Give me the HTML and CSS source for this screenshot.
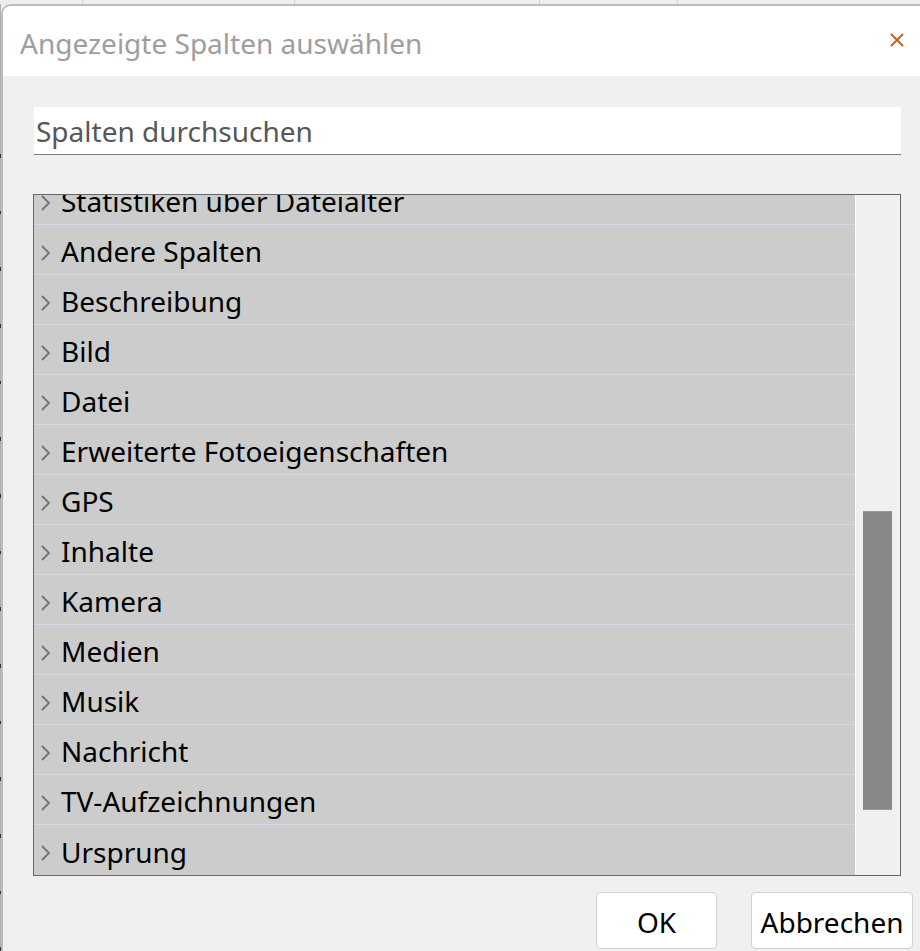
FILE: index.html
```html
<!DOCTYPE html>
<html lang="de">
<head>
<meta charset="utf-8">
<title>Angezeigte Spalten auswählen</title>
<link rel="stylesheet" href="styles.css">
</head>
<body>
<div class="backdrop-top">
  <div class="bt-cell c1"></div>
  <div class="bt-cell c2"></div>
  <div class="bt-cell c3"></div>
  <div class="bt-cell c4"></div>
  <div class="bt-cell c5"></div>
</div>
<div class="screen">
  <div class="left-strip">
    <span class="mark"></span><span class="mark"></span><span class="mark"></span><span class="mark"></span><span class="mark"></span><span class="mark"></span><span class="mark"></span><span class="mark"></span><span class="mark"></span><span class="mark"></span><span class="mark"></span><span class="mark"></span><span class="mark"></span><span class="mark"></span><span class="mark"></span>
  </div>
  <div class="dialog">
    <div class="titlebar">
      <div class="title">Angezeigte Spalten auswählen</div>
      <div class="close" aria-label="Schließen">
        <svg width="14" height="14" viewBox="0 0 14 14"><path d="M1 1 L13 13 M13 1 L1 13" stroke="#c85a1e" stroke-width="1.8" fill="none"/></svg>
      </div>
    </div>
    <div class="body">
      <div class="search">Spalten durchsuchen</div>
      <div class="list">
        <div class="rows">
          <div class="rows-inner">
            <div class="row"><svg class="chev" width="11" height="18" viewBox="0 0 11 18"><path d="M2 2 L9 9 L2 16" stroke="#767676" stroke-width="1.9" fill="none"/></svg><span class="label">Statistiken über Dateialter</span></div>
            <div class="row"><svg class="chev" width="11" height="18" viewBox="0 0 11 18"><path d="M2 2 L9 9 L2 16" stroke="#767676" stroke-width="1.9" fill="none"/></svg><span class="label">Andere Spalten</span></div>
            <div class="row"><svg class="chev" width="11" height="18" viewBox="0 0 11 18"><path d="M2 2 L9 9 L2 16" stroke="#767676" stroke-width="1.9" fill="none"/></svg><span class="label">Beschreibung</span></div>
            <div class="row"><svg class="chev" width="11" height="18" viewBox="0 0 11 18"><path d="M2 2 L9 9 L2 16" stroke="#767676" stroke-width="1.9" fill="none"/></svg><span class="label">Bild</span></div>
            <div class="row"><svg class="chev" width="11" height="18" viewBox="0 0 11 18"><path d="M2 2 L9 9 L2 16" stroke="#767676" stroke-width="1.9" fill="none"/></svg><span class="label">Datei</span></div>
            <div class="row"><svg class="chev" width="11" height="18" viewBox="0 0 11 18"><path d="M2 2 L9 9 L2 16" stroke="#767676" stroke-width="1.9" fill="none"/></svg><span class="label">Erweiterte Fotoeigenschaften</span></div>
            <div class="row"><svg class="chev" width="11" height="18" viewBox="0 0 11 18"><path d="M2 2 L9 9 L2 16" stroke="#767676" stroke-width="1.9" fill="none"/></svg><span class="label">GPS</span></div>
            <div class="row"><svg class="chev" width="11" height="18" viewBox="0 0 11 18"><path d="M2 2 L9 9 L2 16" stroke="#767676" stroke-width="1.9" fill="none"/></svg><span class="label">Inhalte</span></div>
            <div class="row"><svg class="chev" width="11" height="18" viewBox="0 0 11 18"><path d="M2 2 L9 9 L2 16" stroke="#767676" stroke-width="1.9" fill="none"/></svg><span class="label">Kamera</span></div>
            <div class="row"><svg class="chev" width="11" height="18" viewBox="0 0 11 18"><path d="M2 2 L9 9 L2 16" stroke="#767676" stroke-width="1.9" fill="none"/></svg><span class="label">Medien</span></div>
            <div class="row"><svg class="chev" width="11" height="18" viewBox="0 0 11 18"><path d="M2 2 L9 9 L2 16" stroke="#767676" stroke-width="1.9" fill="none"/></svg><span class="label">Musik</span></div>
            <div class="row"><svg class="chev" width="11" height="18" viewBox="0 0 11 18"><path d="M2 2 L9 9 L2 16" stroke="#767676" stroke-width="1.9" fill="none"/></svg><span class="label">Nachricht</span></div>
            <div class="row"><svg class="chev" width="11" height="18" viewBox="0 0 11 18"><path d="M2 2 L9 9 L2 16" stroke="#767676" stroke-width="1.9" fill="none"/></svg><span class="label">TV-Aufzeichnungen</span></div>
            <div class="row last"><svg class="chev" width="11" height="18" viewBox="0 0 11 18"><path d="M2 2 L9 9 L2 16" stroke="#767676" stroke-width="1.9" fill="none"/></svg><span class="label">Ursprung</span></div>
          </div>
        </div>
        <div class="scrollbar">
          <div class="thumb"></div>
        </div>
      </div>
      <div class="buttons">
        <button class="btn ok">OK</button>
        <button class="btn cancel">Abbrechen</button>
      </div>
    </div>
  </div>
</div>
</body>
</html>
```

FILE: styles.css
```css
* { box-sizing: border-box; }

html, body {
  margin: 0;
  padding: 0;
}

body {
  width: 920px;
  height: 951px;
  overflow: hidden;
  background: #b4b4b4;
  font-family: "Noto Sans", "Open Sans", sans-serif;
}

.backdrop-top {
  display: flex;
  height: 4px;
  background: #eeeeee;
}

.bt-cell {
  height: 4px;
  border-right: 1px solid #d2d2d2;
}
.c1 { width: 83px; }
.c2 { width: 212px; }
.c3 { width: 245px; }
.c4 { width: 138px; }
.c5 { flex: 1; border-right: none; }

.screen {
  display: flex;
  height: 947px;
  background: #eeeeee;
}

.left-strip {
  width: 1px;
  background: #b0b0b0;
  display: flex;
  flex-direction: column;
  padding-top: 150px;
  gap: 53px;
}

.mark {
  display: block;
  width: 1px;
  height: 6px;
  background: #333;
}

.dialog {
  flex: 1;
  display: flex;
  flex-direction: column;
  background: #f0f0f0;
  border-top: 2px solid #bcbcbc;
  border-left: 2px solid #bcbcbc;
  border-top-left-radius: 10px;
  overflow: hidden;
}

.titlebar {
  height: 70px;
  background: #ffffff;
  display: flex;
  align-items: center;
  justify-content: space-between;
  padding-left: 17px;
  padding-right: 16px;
}

.title {
  font-size: 28px;
  color: #9e9e9e;
  line-height: 36px;
  padding-top: 4px;
}

.close {
  display: flex;
  width: 14px;
  height: 14px;
  align-items: center;
  justify-content: center;
  margin-top: -2px;
}

.body {
  padding: 31px 19px 0 30px;
  display: flex;
  flex-direction: column;
}

.search {
  margin-left: 1px;
  height: 48px;
  background: #ffffff;
  border-bottom: 1px solid #7a7a7a;
  font-size: 28px;
  color: #575757;
  line-height: 44px;
  padding-top: 2px;
  padding-left: 2px;
}

.list {
  margin-top: 39px;
  height: 682px;
  border: 1px solid #666666;
  display: flex;
  overflow: hidden;
}

.rows {
  width: 821px;
  overflow: hidden;
  background: #cccccc;
}

.rows-inner {
  margin-top: -20px;
  display: flex;
  flex-direction: column;
}

.row {
  height: 50px;
  padding-top: 4px;
  border-bottom: 1px solid #d8d8ea;
  display: flex;
  align-items: center;
  color: #000000;
  font-size: 28px;
  line-height: 45px;
}

.row.last { border-bottom: none; }

.chev {
  margin-left: 6px;
  margin-top: 2px;
  flex: none;
}

.label {
  margin-left: 10px;
  white-space: nowrap;
}

.scrollbar {
  flex: 1;
  background: #f0f0f0;
  border-left: 1px solid #ffffff;
  padding: 316px 8px 0 7px;
}

.thumb {
  height: 299px;
  background: #878787;
  border-top: 1px solid #999999;
  border-bottom: 1px solid #999999;
}

.buttons {
  display: flex;
  justify-content: flex-end;
  gap: 34px;
  margin-top: 16px;
  margin-right: -12px;
}

.btn {
  font-family: "Noto Sans", "Open Sans", sans-serif;
  font-size: 28px;
  color: #000000;
  background: #ffffff;
  border: 1px solid #d0d0d0;
  border-radius: 4px;
  height: 57px;
  padding: 2px 0 0 0;
  line-height: 52px;
}

.ok { width: 121px; }
.cancel { width: 162px; }
```
